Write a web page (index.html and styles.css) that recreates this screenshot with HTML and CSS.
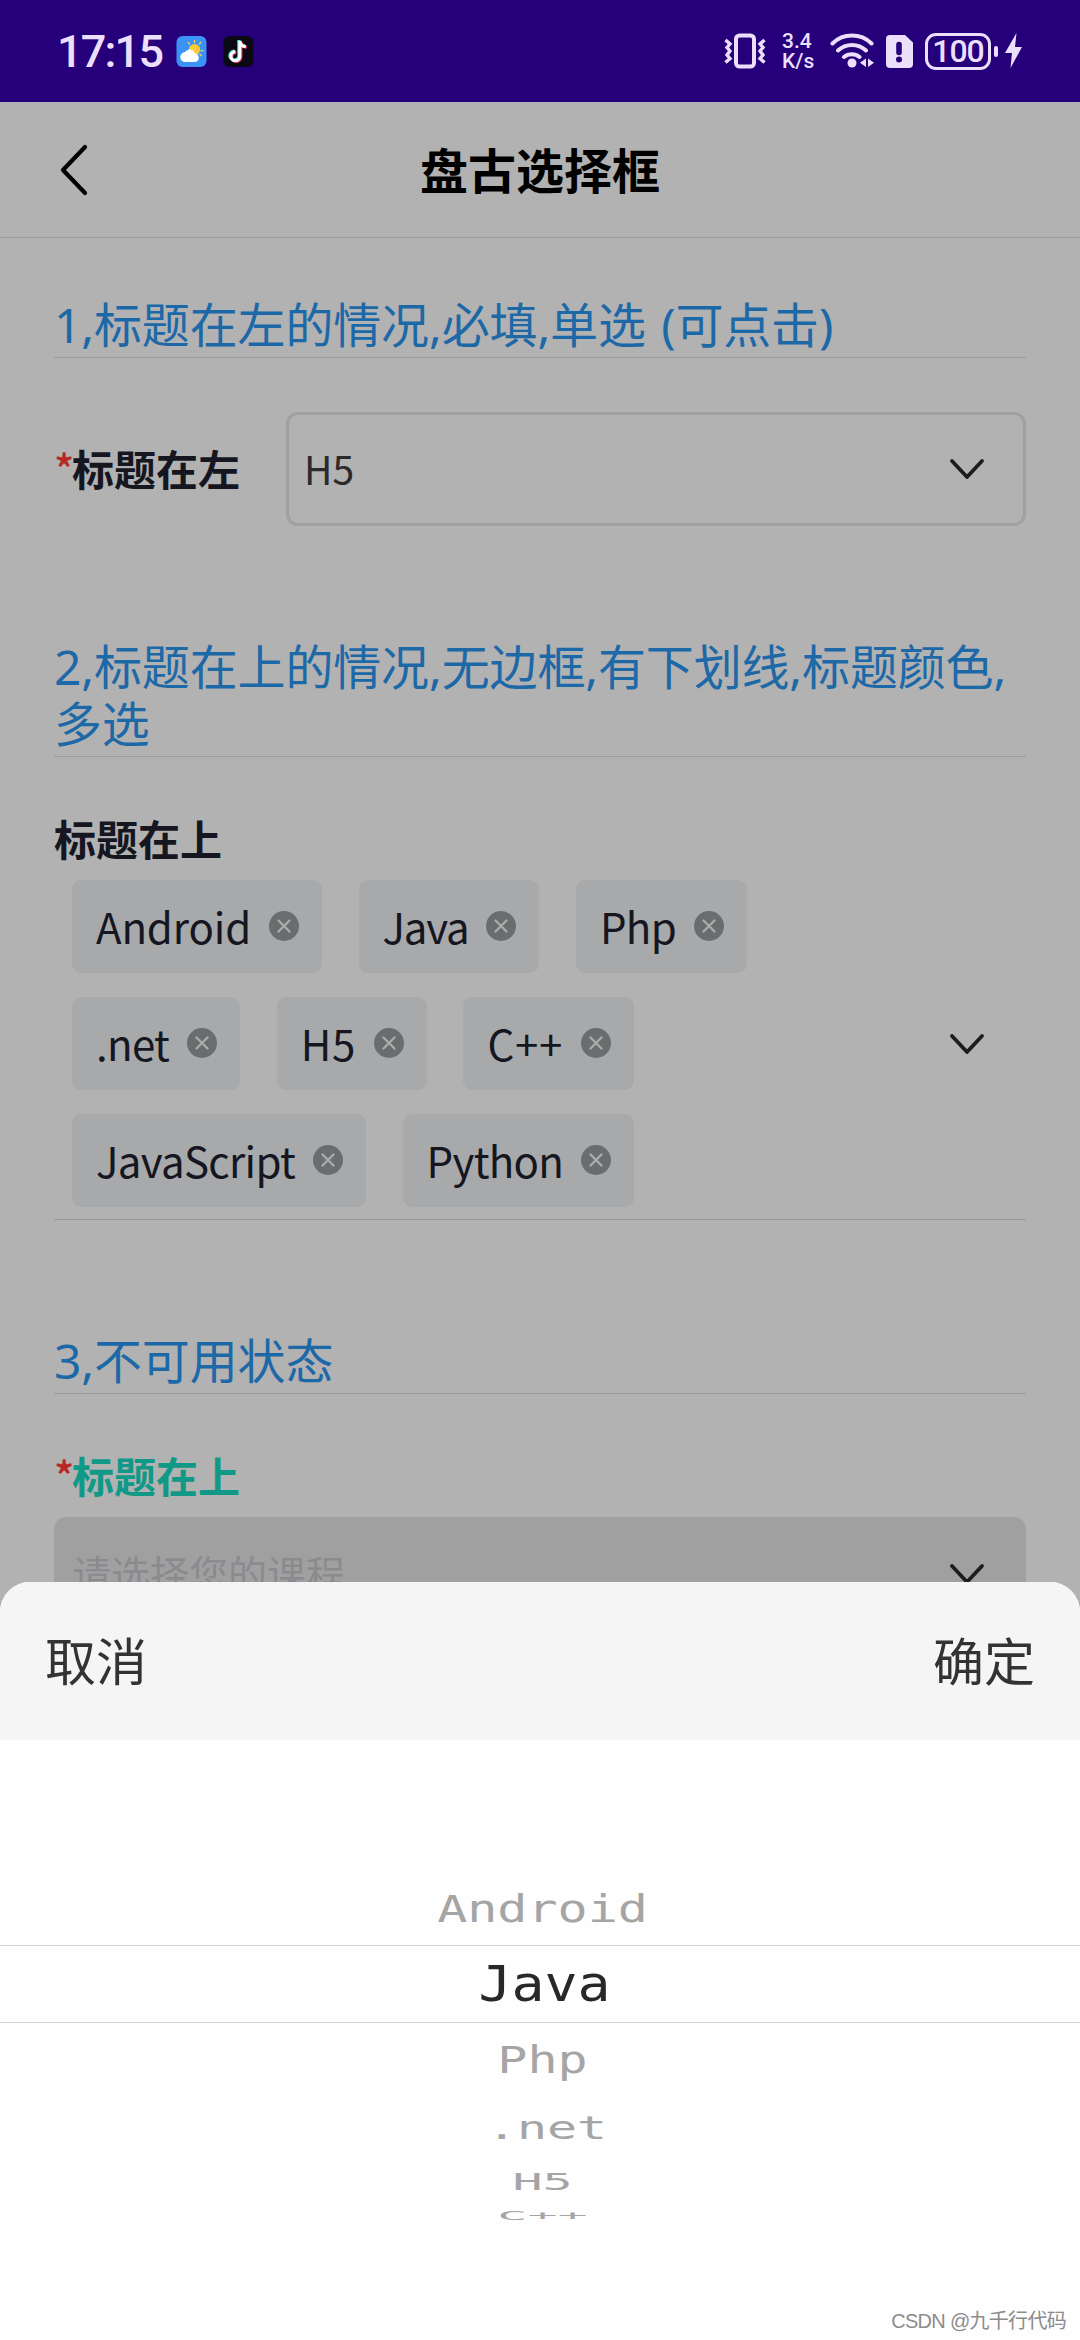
FILE: index.html
```html
<!DOCTYPE html>
<html lang="zh-CN">
<head>
<meta charset="utf-8">
<title>盘古选择框</title>
<link rel="stylesheet" href="styles.css">
</head>
<body>
<svg class="defs" width="0" height="0">
  <symbol id="chevron" viewBox="0 0 36 24"><path d="M3 4l15 16L33 4" fill="none" stroke="#1d1d1d" stroke-width="3.800" stroke-linecap="round" stroke-linejoin="round"/></symbol>
  <symbol id="remove" viewBox="0 0 30 30"><circle cx="15" cy="15" r="15" fill="#6b6c6d"/><path d="M9.500 9.500l11 11M20.500 9.500l-11 11" stroke="#aaabac" stroke-width="2.400" stroke-linecap="round"/></symbol>
</svg>
<div class="screen">
  <div class="status">
    <span class="time">17:15</span>
    <svg class="weather" width="31" height="31" viewBox="0 0 30 31">
      <rect width="30" height="31" rx="6" fill="#3b93f6"/>
      <path d="M18 4v3M11.500 6l1.800 2.400M24.500 6l-1.800 2.400M24 14.700h3M23 18l2 2" stroke="#f1d35e" stroke-width="1.300"/>
      <circle cx="18" cy="13.500" r="5.600" fill="#fbcb35"/>
      <path d="M9 26a5 5 0 0 1-.5-10 5.500 5.500 0 0 1 9.800 1.200A4.500 4.500 0 0 1 19 26z" fill="#fff"/>
    </svg>
    <svg class="tiktok" width="31" height="31" viewBox="0 0 30 31">
      <rect width="30" height="31" rx="6" fill="#0b0a14"/>
      <g fill="none" stroke-width="3.200">
        <path d="M15.300 4v16a4.500 4.500 0 1 1-4.500-5M15.300 4.500c.5 3 2.500 5 6 5.200" stroke="#2fd8d4"/>
        <path d="M17.300 5.500v16a4.500 4.500 0 1 1-4.500-5M17.300 6c.5 3 2.500 5 6 5.200" stroke="#ee3058"/>
        <path d="M16.300 4.700v16a4.500 4.500 0 1 1-4.500-5M16.300 5c.5 3.500 2.500 5.500 6 5.700" stroke="#fff"/>
      </g>
    </svg>
    <svg class="vibrate" width="42" height="36" viewBox="0 0 42 36" fill="none" stroke="#ecdffc">
      <rect x="12" y="2.500" width="18" height="31" rx="3.500" stroke-width="4"/>
      <path d="M1.500 7l4.500 4-3 3.500 3 3.500-3 4 3 3.500-4.500 4M40.500 7L36 11l3 3.500-3 3.500 3 4-3 3.500 4.500 4" stroke-width="3.400"/>
    </svg>
    <span class="speed"><span>3.4</span><span>K/s</span></span>
    <svg class="wifi" width="44" height="36" viewBox="0 0 44 36" fill="none" stroke="#ecdffc" stroke-width="4" stroke-linecap="round">
      <path d="M2.500 10.500a28 28 0 0 1 39 0M8 17.500a20.500 20.500 0 0 1 28 0M14 24a12 12 0 0 1 15.500 0"/>
      <circle cx="22" cy="30" r="4.500" fill="#ecdffc" stroke="none"/>
      <path d="M36 25.500v8.500l-6-4.250zM38 25.500v8.500l6-4.250z" fill="#ecdffc" stroke="none"/>
    </svg>
    <svg class="sim" width="27" height="33" viewBox="0 0 27 33">
      <path d="M4 0h15l8 7.500V29a4 4 0 0 1-4 4H4a4 4 0 0 1-4-4V4a4 4 0 0 1 4-4z" fill="#ecdffc"/>
      <path d="M13 9.500v8" stroke="#26007a" stroke-width="5.600" stroke-linecap="round"/><circle cx="13" cy="24.500" r="3" fill="#26007a"/>
    </svg>
    <span class="battery">100</span>
    <svg class="charge" width="30" height="36" viewBox="0 0 30 36" fill="#ecdffc">
      <rect x="1" y="13" width="4" height="11" rx="2"/><path d="M23.500 0L12 20h7l-1.500 15L29 14h-7z"/>
    </svg>
  </div>

  <div class="navbar">
    <svg class="back" width="28" height="52" viewBox="0 0 28 52"><path d="M25 3L3 26l22 23" fill="none" stroke="#000" stroke-width="4.200" stroke-linecap="round" stroke-linejoin="round"/></svg>
    <h1 class="title">盘古选择框</h1>
  </div>

  <main class="content">
    <h2 class="heading first">1,标题在左的情况,必填,单选 (可点击)</h2>
    <div class="field-row">
      <span class="label"><i class="star">*</i>标题在左</span>
      <div class="select"><span>H5</span><svg class="chevron"><use href="#chevron"/></svg></div>
    </div>

    <h2 class="heading second">2,标题在上的情况,无边框,有下划线,标题颜色,多选</h2>
    <div class="label above">标题在上</div>
    <div class="multi">
      <div class="chips">
        <div class="chip-row">
          <span class="chip"><span>Android</span><svg class="remove"><use href="#remove"/></svg></span>
          <span class="chip tighter"><span>Java</span><svg class="remove"><use href="#remove"/></svg></span>
          <span class="chip tight"><span>Php</span><svg class="remove"><use href="#remove"/></svg></span>
        </div>
        <div class="chip-row">
          <span class="chip tight"><span>.net</span><svg class="remove"><use href="#remove"/></svg></span>
          <span class="chip loose"><span>H5</span><svg class="remove"><use href="#remove"/></svg></span>
          <span class="chip loose"><span>C++</span><svg class="remove"><use href="#remove"/></svg></span>
        </div>
        <div class="chip-row">
          <span class="chip tight"><span>JavaScript</span><svg class="remove"><use href="#remove"/></svg></span>
          <span class="chip tight"><span>Python</span><svg class="remove"><use href="#remove"/></svg></span>
        </div>
      </div>
      <svg class="chevron"><use href="#chevron"/></svg>
    </div>

    <h2 class="heading third">3,不可用状态</h2>
    <div class="label teal"><i class="star">*</i>标题在上</div>
    <div class="select disabled"><span>请选择您的课程</span><svg class="chevron"><use href="#chevron"/></svg></div>
  </main>

  <section class="sheet">
    <div class="actions"><span>取消</span><span>确定</span></div>
    <div class="wheel">
      <div class="item i1"><span>Android</span></div>
      <div class="item current"><span>Java</span></div>
      <div class="item i3"><span>Php</span></div>
      <div class="item i4"><span>.net</span></div>
      <div class="item i5"><span>H5</span></div>
      <div class="item i6"><span>C++</span></div>
    </div>
    <div class="credit">CSDN @九千行代码</div>
  </section>
</div>
</body>
</html>
```
FILE: styles.css
```css
* { box-sizing: border-box; }
body { margin: 0; font-family: "Noto Sans CJK SC", sans-serif; }
h1, h2 { margin: 0; font-weight: 400; }
svg { display: block; flex: none; }
.defs { position: absolute; }
.screen { position: relative; width: 1080px; height: 2340px; overflow: hidden; background: #b2b2b2; }

.status { display: flex; align-items: center; height: 102px; padding: 0 57px 0 57px; background: #26007a; color: #ecdffc; }
.time { width: 119px; padding-top: 2px; font: 500 45px/60px Roboto, sans-serif; letter-spacing: -1.8px; }
.tiktok { margin-left: 16px; }
.vibrate { margin-left: auto; }
.speed { display: flex; flex-direction: column; gap: 1px; width: 34px; margin-left: 16px; font: 500 21px/19px Roboto, sans-serif; }
.wifi { margin-left: 14px; }
.sim { margin-left: 12px; }
.battery { display: flex; align-items: center; justify-content: center; width: 66px; height: 37px; margin-left: 12px; border: 3px solid #ecdffc; border-radius: 11px; font: 500 32px/31px Roboto, sans-serif; letter-spacing: -1px; }
.charge { margin-left: 2px; }

.navbar { display: grid; grid-template-columns: 60px 1fr 60px; align-items: center; height: 136px; padding: 0 60px; border-bottom: 1px solid #9c9c9c; }
.title { grid-column: 2; padding-bottom: 4px; text-align: center; font-size: 48px; line-height: 60px; font-weight: 700; color: #000; }

.content { padding: 0 54px; }
.heading { font-family: "Noto Sans", "Noto Sans CJK SC", sans-serif; font-size: 48px; line-height: 57px; letter-spacing: -.15px; word-spacing: 3px; color: #1d68a7; border-bottom: 1px solid #9c9c9c; padding-bottom: 4px; }
.heading.first { margin-top: 58px; }
.field-row { display: flex; align-items: center; margin-top: 54px; }
.label { display: flex; width: 232px; padding-bottom: 2px; font-size: 42px; line-height: 48px; font-weight: 700; color: #15161f; }
.star { width: 18px; font-style: normal; font-weight: 500; color: #b92725; }
.select { display: flex; align-items: center; justify-content: space-between; flex: 1; height: 114px; padding: 0 38px 0 15px; border: 3px solid #a0a0a0; border-radius: 12px; font-size: 39px; line-height: 50px; color: #2a2a2a; }
.select span { padding-bottom: 2px; }
.chevron { width: 36px; height: 24px; }
.heading.second { margin-top: 112px; }
.label.above { margin-top: 57px; }
.multi { display: flex; align-items: center; justify-content: space-between; margin-top: 16px; padding: 0 41px 12px 18px; border-bottom: 1px solid #9a9a9a; }
.chips { display: flex; flex-direction: column; gap: 24px; }
.chip-row { display: flex; gap: 36.5px; }
.chip { display: flex; align-items: center; height: 93px; padding: 0 23px 0 24px; border-radius: 9px; background: #a8a9ab; color: #15161f; font-size: 42px; line-height: 60px; letter-spacing: -.15px; }
.chip span { padding-bottom: 2px; }
.chip.tight { letter-spacing: -.7px; }
.chip.tighter { letter-spacing: -1.2px; }
.chip.loose { letter-spacing: .7px; }
.remove { width: 30px; height: 30px; margin: 0 0 1px 18px; }
.heading.third { margin-top: 112px; }
.label.teal { margin-top: 57px; color: #0f9986; }
.select.disabled { margin-top: 16px; background: #a0a0a0; color: #8b8b8f; }
.select.disabled span { padding-bottom: 4px; }

.sheet { position: absolute; left: 0; right: 0; bottom: 0; height: 758px; display: flex; flex-direction: column; border-radius: 30px 30px 0 0; overflow: hidden; background: #fefefe; }
.actions { display: flex; align-items: center; justify-content: space-between; height: 158px; padding: 0 45px 4px; background: #f5f5f5; font-size: 51px; line-height: 60px; color: #333; }
.wheel { padding-top: 132px; font: 50px/74px "DejaVu Sans Mono", monospace; color: #a5a5a5; }
.item { display: flex; align-items: center; justify-content: center; padding-left: 5px; }
.item span { display: block; }
.i1 { height: 73px; }
.i1 span { transform: scaleY(.74); }
.current { height: 78px; padding-left: 9px; border: solid #d4d4d4; border-width: 1px 0; font-size: 54.8px; color: #282828; }
.current span { transform: scaleY(.9); }
.i3 { height: 74px; }
.i3 span { transform: scaleY(.74); }
.i4 { height: 62px; padding-left: 14px; }
.i4 span { transform: scaleY(.64); }
.i5 { height: 46px; }
.i5 span { transform: scaleY(.47); }
.i6 { height: 22px; }
.i6 span { transform: scaleY(.26); }
.credit { margin: auto 14px 4px; text-align: right; font: 20px/30px "Liberation Sans", "Noto Sans CJK SC", sans-serif; letter-spacing: -.7px; color: #8c8c8c; }
```
